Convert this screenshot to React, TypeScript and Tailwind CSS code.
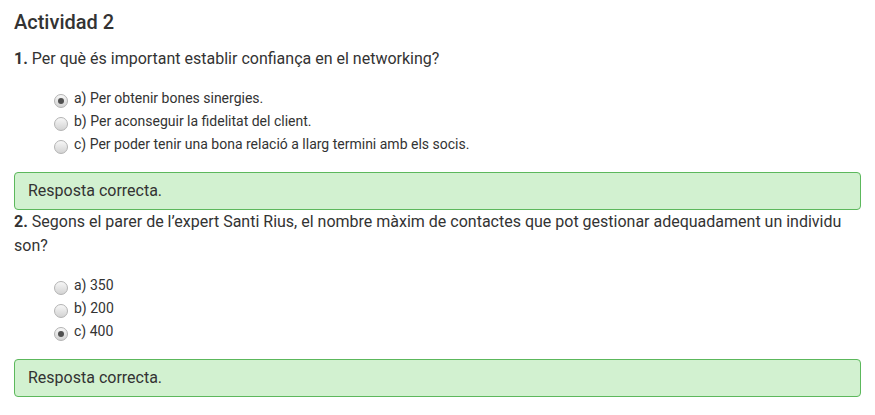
import React from "react";

function Radio({ checked }: { checked?: boolean }) {
  return (
    <span className="mt-[4px] flex h-[14px] w-[14px] shrink-0 items-center justify-center rounded-full border border-[#b3b3b3] bg-gradient-to-b from-[#f7f7f7] to-[#d3d3d3]">
      {checked && <span className="h-[6px] w-[6px] rounded-full bg-[#505050]" />}
    </span>
  );
}

function Option({ label, checked }: { label: string; checked?: boolean }) {
  return (
    <li className="flex h-[23px] items-center gap-[6px]">
      <Radio checked={checked} />
      <span className="text-[14px] leading-[23px] text-[#333]">{label}</span>
    </li>
  );
}

function Alert() {
  return (
    <div className="rounded-[4px] border border-[#5cb85c] bg-[#d2f1d0] px-[13px] py-[6px] text-[16px] leading-[24px] text-[#333]">
      Resposta correcta.
    </div>
  );
}

export default function App() {
  return (
    <div
      className="min-h-[415px] w-[875px] bg-white px-[14px] pt-[11px] text-[#333]"
      style={{ fontFamily: "Roboto, 'Liberation Sans', sans-serif" }}
    >
      <h2 className="text-[20px] font-medium leading-[22px] text-[#333]">Actividad 2</h2>
      <p className="mt-[14px] text-[16px] leading-[24px]">
        <span className="font-bold">1.</span> Per què és important establir confiança en el networking?
      </p>
      <ul className="mt-[16px] pl-[40px]">
        <Option label="a) Per obtenir bones sinergies." checked />
        <Option label="b) Per aconseguir la fidelitat del client." />
        <Option label="c) Per poder tenir una bona relació a llarg termini amb els socis." />
      </ul>
      <div className="mt-[16px]">
        <Alert />
      </div>
      <p className="text-[16px] leading-[24px]">
        <span className="font-bold">2.</span> Segons el parer de l’expert Santi Rius, el nombre màxim de contactes que pot gestionar adequadament un individu son?
      </p>
      <ul className="mt-[16px] pl-[40px]">
        <Option label="a) 350" />
        <Option label="b) 200" />
        <Option label="c) 400" checked />
      </ul>
      <div className="mt-[16px]">
        <Alert />
      </div>
    </div>
  );
}
